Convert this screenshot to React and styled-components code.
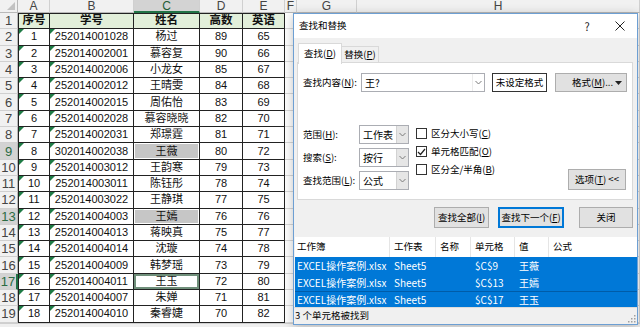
import React from "react";
import styled, { createGlobalStyle, css } from "styled-components";

const GlobalStyle = createGlobalStyle`
  html, body { margin: 0; padding: 0; width: 640px; height: 327px; overflow: hidden; background: #fff; }
  #root { width: 640px; height: 327px; overflow: hidden; }
  * { box-sizing: border-box; }
`;

const UI_FONT = `"Noto Sans CJK SC", "Noto Sans", sans-serif`;
const CELL_FONT = `"Liberation Sans", "Noto Sans CJK SC", sans-serif`;

const Screen = styled.div`
  position: relative;
  width: 640px;
  height: 327px;
  overflow: hidden;
  font-family: ${UI_FONT};
`;

/* ---------- spreadsheet ---------- */
const Sheet = styled.div`
  display: grid;
  grid-template-columns: 18px 32px 84px 66px 43px 42px 12px 60px 283px;
  grid-template-rows: 13px repeat(19, 16.3px) 1fr;
  width: 640px;
  height: 327px;
  background: #fff;
`;

const HeadBase = css`
  display: flex;
  align-items: center;
  justify-content: center;
  background: #f1f1f1;
  color: #444;
  font-family: "Liberation Sans", Arial, sans-serif;
  overflow: hidden;
`;

const Corner = styled.div`
  ${HeadBase};
  position: relative;
  border-right: 1px solid #b9b9b9;
  border-bottom: 1px solid #b9b9b9;
  &::after {
    content: "";
    position: absolute;
    right: 2px;
    bottom: 2px;
    border-left: 8px solid transparent;
    border-bottom: 8px solid #c2c2c2;
  }
`;

const ColHead = styled.div`
  ${HeadBase};
  font-size: 12px;
  border-right: 1px solid #d0d0d0;
  border-bottom: ${(p) => (p.$sel ? "2px solid #217346" : "1px solid #b9b9b9")};
  background: ${(p) => (p.$sel ? "#d3d3d3" : "#f1f1f1")};
  color: ${(p) => (p.$sel ? "#1f5c36" : "#444")};
`;

const RowHead = styled.div`
  ${HeadBase};
  font-size: 13px;
  border-bottom: 1px solid #d0d0d0;
  border-right: ${(p) => (p.$active ? "2px solid #217346" : "1px solid #b9b9b9")};
  background: ${(p) => (p.$sel ? "#d3d3d3" : "#f1f1f1")};
  color: ${(p) => (p.$sel ? "#2b6b43" : "#444")};
`;

const Cell = styled.div`
  position: relative;
  display: flex;
  align-items: center;
  justify-content: center;
  font-family: ${CELL_FONT};
  font-size: 11px;
  line-height: 1;
  color: #111;
  white-space: nowrap;
  overflow: hidden;
  border-right: 1px solid #222;
  border-bottom: 1px solid #222;
  ${(p) => p.$left && "border-left: 1px solid #222;"}
  ${(p) => p.$top && "border-top: 1px solid #222;"}
  ${(p) =>
    p.$head &&
    css`
      background: #e2efda;
      font-weight: 700;
      font-size: 11.5px;
    `}
  ${(p) =>
    p.$shade &&
    css`
      background: #c6c6c6;
      box-shadow: inset 0 0 0 1px #fff;
    `}
  ${(p) =>
    p.$active &&
    css`
      box-shadow: inset 0 0 0 2px #6f8f7a;
    `}
  ${(p) =>
    p.$flag &&
    css`
      &::before {
        content: "";
        position: absolute;
        left: 0;
        top: 0;
        border-top: 5px solid #1e7b45;
        border-right: 5px solid transparent;
      }
    `}
`;

const EmptyCell = styled.div`
  border-right: 1px solid #d8d8d8;
  border-bottom: 1px solid #d8d8d8;
`;

const SheetFooter = styled.div`
  grid-column: 1 / -1;
  background: #efefef;
  border-top: 1px solid #cfcfcf;
`;

/* ---------- dialog ---------- */
const Dialog = styled.div`
  position: absolute;
  left: 293px;
  top: 13px;
  width: 345px;
  height: 312px;
  border: 1px solid #6d9fd3;
  background: #f0f0f0;
  box-shadow: 0 2px 10px rgba(0, 0, 0, 0.25);
  display: flex;
  flex-direction: column;
  font-family: ${UI_FONT};
  font-size: 9.5px;
  color: #000;
  line-height: 1;
`;

const TitleBar = styled.div`
  height: 24px;
  flex: none;
  background: #fff;
  display: flex;
  align-items: center;
  padding-left: 5px;
`;

const Title = styled.span`
  font-size: 9.5px;
  flex: 1;
`;

const TitleBtn = styled.div`
  width: ${(p) => p.$w}px;
  height: 24px;
  display: flex;
  align-items: center;
  justify-content: center;
  font-size: 11px;
  color: #222;
`;

const TabStrip = styled.div`
  display: flex;
  align-items: flex-end;
  height: 20px;
  margin: 5px 0 0 4px;
  position: relative;
  z-index: 1;
`;

const Tab = styled.div`
  height: ${(p) => (p.$active ? 21 : 17)}px;
  width: ${(p) => p.$w}px;
  display: flex;
  align-items: center;
  justify-content: center;
  border: 1px solid #d9d9d9;
  border-bottom: ${(p) => (p.$active ? "none" : "1px solid #d9d9d9")};
  margin-left: ${(p) => (p.$active ? 0 : -1)}px;
  background: ${(p) => (p.$active ? "#fff" : "#f0f0f0")};
  position: relative;
  top: ${(p) => (p.$active ? 1 : 0)}px;
`;

const Panel = styled.div`
  height: 138px;
  margin: -1px 4px 0 3px;
  border: 1px solid #d9d9d9;
  background: #fff;
  padding: 10px 5px 0 5px;
  display: flex;
  flex-direction: column;
`;

const FindRow = styled.div`
  display: flex;
  align-items: center;
  height: 19px;
`;

const Label = styled.span`
  width: ${(p) => p.$w}px;
  flex: none;
  white-space: nowrap;
`;

const ComboBox = styled.div`
  width: ${(p) => p.$w}px;
  height: 19px;
  flex: none;
  border: 1px solid #abadb3;
  background: #fff;
  display: flex;
  align-items: stretch;
`;

const ComboText = styled.span`
  flex: 1;
  display: flex;
  align-items: center;
  padding-left: 3px;
  font-size: 10px;
`;

const ComboArrow = styled.span`
  width: 12px;
  display: flex;
  align-items: center;
  justify-content: center;
  background: ${(p) => (p.$gray ? "#e6e6e6" : "#fff")};
  border-left: 1px solid ${(p) => (p.$gray ? "#d2d2d2" : "#ececec")};
`;

const FormatPreview = styled.div`
  width: 55px;
  height: 19px;
  margin-left: 7px;
  border: 1px solid #333;
  background: #fff;
  display: flex;
  align-items: center;
  justify-content: center;
`;

const Button = styled.div`
  width: ${(p) => p.$w}px;
  height: ${(p) => p.$h || 21}px;
  flex: none;
  background: #e1e1e1;
  border: 1px solid ${(p) => (p.$focus ? "#0078d7" : "#adadad")};
  ${(p) => p.$focus && "box-shadow: inset 0 0 0 1px #0078d7;"}
  display: flex;
  align-items: center;
  justify-content: ${(p) => p.$justify || "center"};
  padding: ${(p) => p.$pad || "0"};
  margin-left: ${(p) => p.$ml || 0}px;
  white-space: nowrap;
`;

const OptionsArea = styled.div`
  display: flex;
  margin-top: 33px;
`;

const SelectColumn = styled.div`
  display: flex;
  flex-direction: column;
  gap: 4px;
`;

const SelectRow = styled.div`
  display: flex;
  align-items: center;
`;

const CheckColumn = styled.div`
  display: flex;
  flex-direction: column;
  gap: 7px;
  margin-left: 7px;
  padding-top: 3px;
`;

const CheckRow = styled.label`
  display: flex;
  align-items: center;
  height: 11px;
  gap: 4px;
  white-space: nowrap;
`;

const Box = styled.span`
  width: 11px;
  height: 11px;
  border: 1px solid #333;
  background: #fff;
  display: flex;
  align-items: center;
  justify-content: center;
`;

const OptionsBtnWrap = styled.div`
  margin-left: auto;
  margin-right: 1px;
  display: flex;
  align-items: flex-end;
`;

const ButtonRow = styled.div`
  display: flex;
  justify-content: flex-end;
  margin: 7px 4px 0 0;
`;

const ResultList = styled.div`
  margin: 9px 0 0 1px;
  height: 70px;
  background: #fff;
  display: flex;
  flex-direction: column;
`;

const ResultRow = styled.div`
  display: grid;
  grid-template-columns: 95px 46px 35px 44px 34px 1fr;
  height: ${(p) => p.$h}px;
  background: ${(p) => (p.$sel ? "#0078d7" : "#fff")};
  color: ${(p) => (p.$sel ? "#fff" : "#000")};
  font-size: ${(p) => (p.$sel ? 10 : 9.5)}px;
  ${(p) => p.$line && "border-top: 1px solid #005ca8;"}
`;

const ResultCell = styled.div`
  display: flex;
  align-items: center;
  padding-left: ${(p) => (p.$first ? 2 : 4)}px;
  white-space: nowrap;
  overflow: hidden;
  ${(p) => p.$sep && "border-right: 1px solid #e5e5e5;"}
`;

const StatusBar = styled.div`
  flex: 1;
  border-top: 1px solid #dcdcdc;
  display: flex;
  align-items: center;
  padding-left: 1px;
  position: relative;
`;

const Grip = styled.svg`
  position: absolute;
  right: 1px;
  bottom: 1px;
`;

/* ---------- icons ---------- */
const Chevron = () => (
  <svg width="7" height="5" viewBox="0 0 7 5">
    <polyline points="0.5,1 3.5,4 6.5,1" fill="none" stroke="#7a7a7a" strokeWidth="1" />
  </svg>
);

const Caret = () => (
  <svg width="7" height="4" viewBox="0 0 7 4">
    <polygon points="0,0 7,0 3.5,4" fill="#222" />
  </svg>
);

const CloseIcon = () => (
  <svg width="10" height="10" viewBox="0 0 10 10">
    <line x1="0.5" y1="0.5" x2="9.5" y2="9.5" stroke="#222" strokeWidth="1" />
    <line x1="9.5" y1="0.5" x2="0.5" y2="9.5" stroke="#222" strokeWidth="1" />
  </svg>
);

const Check = () => (
  <svg width="9" height="8" viewBox="0 0 9 8">
    <polyline points="1,4 3.5,6.5 8,1" fill="none" stroke="#222" strokeWidth="1.2" />
  </svg>
);

/* ---------- data ---------- */
const rows = [
  ["1", "252014001028", "杨过", "89", "65"],
  ["2", "252014002001", "慕容复", "90", "66"],
  ["3", "252014002006", "小龙女", "85", "67"],
  ["4", "252014002012", "王晴雯", "84", "68"],
  ["5", "252014002015", "周佑怡", "83", "69"],
  ["6", "252014002028", "慕容晓晓", "82", "70"],
  ["7", "252014002031", "郑璟霆", "81", "71"],
  ["8", "302014002038", "王薇", "80", "72"],
  ["9", "252014003012", "王韵寒", "79", "73"],
  ["10", "252014003011", "陈钰彤", "78", "74"],
  ["11", "252014003022", "王静琪", "77", "75"],
  ["12", "252014004003", "王嫣", "76", "76"],
  ["13", "252014004013", "蒋映真", "75", "77"],
  ["14", "252014004014", "沈璇", "74", "78"],
  ["15", "252014004009", "韩梦瑶", "73", "79"],
  ["16", "252014004011", "王玉", "72", "80"],
  ["17", "252014004007", "朱婵", "71", "81"],
  ["18", "252014004010", "秦睿婕", "70", "82"],
];

const shadedRows = [9, 13];
const activeRow = 17;

const results = [
  ["EXCEL操作案例.xlsx", "Sheet5", "", "$C$9", "王薇"],
  ["EXCEL操作案例.xlsx", "Sheet5", "", "$C$13", "王嫣"],
  ["EXCEL操作案例.xlsx", "Sheet5", "", "$C$17", "王玉"],
];

const Acc = ({ text, k }) => (
  <>
    {text}(<u>{k}</u>)
  </>
);

function SpreadSheet() {
  const letters = ["A", "B", "C", "D", "E", "F", "G", "H"];
  const headers = ["序号", "学号", "姓名", "高数", "英语"];
  return (
    <Sheet>
      <Corner />
      {letters.map((l) => (
        <ColHead key={l} $sel={l === "C"}>
          {l}
        </ColHead>
      ))}
      <RowHead>1</RowHead>
      {headers.map((h, i) => (
        <Cell key={h} $head $top $left={i === 0}>
          {h}
        </Cell>
      ))}
      <EmptyCell />
      <EmptyCell />
      <EmptyCell />
      {rows.map((r, idx) => {
        const n = idx + 2;
        const sel = shadedRows.includes(n) || n === activeRow;
        return (
          <React.Fragment key={n}>
            <RowHead $sel={sel} $active={n === activeRow}>
              {n}
            </RowHead>
            {r.map((v, i) => (
              <Cell
                key={i}
                $left={i === 0}
                $flag={i < 2}
                $shade={i === 2 && shadedRows.includes(n)}
                $active={i === 2 && n === activeRow}
              >
                {v}
              </Cell>
            ))}
            <EmptyCell />
            <EmptyCell />
            <EmptyCell />
          </React.Fragment>
        );
      })}
      <SheetFooter />
    </Sheet>
  );
}

function FindDialog() {
  return (
    <Dialog>
      <TitleBar>
        <Title>查找和替换</Title>
        <TitleBtn $w={32}>?</TitleBtn>
        <TitleBtn $w={34}>
          <CloseIcon />
        </TitleBtn>
      </TitleBar>
      <TabStrip>
        <Tab $active $w={44}>
          <Acc text="查找" k="D" />
        </Tab>
        <Tab $w={38}>
          <Acc text="替换" k="P" />
        </Tab>
      </TabStrip>
      <Panel>
        <FindRow>
          <Label $w={58}>
            查找内容(<u>N</u>):
          </Label>
          <ComboBox $w={124}>
            <ComboText>王?</ComboText>
            <ComboArrow>
              <Chevron />
            </ComboArrow>
          </ComboBox>
          <FormatPreview>未设定格式</FormatPreview>
          <Button $w={72} $h={19} $ml={8} $justify="space-between" $pad="0 4px 0 16px">
            <span>
              格式(<u>M</u>)...
            </span>
            <Caret />
          </Button>
        </FindRow>
        <OptionsArea>
          <SelectColumn>
            <SelectRow>
              <Label $w={56}>
                范围(<u>H</u>):
              </Label>
              <ComboBox $w={50}>
                <ComboText>工作表</ComboText>
                <ComboArrow $gray>
                  <Chevron />
                </ComboArrow>
              </ComboBox>
            </SelectRow>
            <SelectRow>
              <Label $w={56}>
                搜索(<u>S</u>):
              </Label>
              <ComboBox $w={50}>
                <ComboText>按行</ComboText>
                <ComboArrow $gray>
                  <Chevron />
                </ComboArrow>
              </ComboBox>
            </SelectRow>
            <SelectRow>
              <Label $w={56}>
                查找范围(<u>L</u>):
              </Label>
              <ComboBox $w={50}>
                <ComboText>公式</ComboText>
                <ComboArrow $gray>
                  <Chevron />
                </ComboArrow>
              </ComboBox>
            </SelectRow>
          </SelectColumn>
          <CheckColumn>
            <CheckRow>
              <Box />
              <span>
                区分大小写(<u>C</u>)
              </span>
            </CheckRow>
            <CheckRow>
              <Box>
                <Check />
              </Box>
              <span>
                单元格匹配(<u>O</u>)
              </span>
            </CheckRow>
            <CheckRow>
              <Box />
              <span>
                区分全/半角(<u>B</u>)
              </span>
            </CheckRow>
          </CheckColumn>
          <OptionsBtnWrap>
            <Button $w={58} $h={21}>
              选项(<u>T</u>)&nbsp;&lt;&lt;
            </Button>
          </OptionsBtnWrap>
        </OptionsArea>
      </Panel>
      <ButtonRow>
        <Button $w={55}>
          查找全部(<u>I</u>)
        </Button>
        <Button $w={66} $ml={9} $focus>
          查找下一个(<u>F</u>)
        </Button>
        <Button $w={54} $ml={15}>
          关闭
        </Button>
      </ButtonRow>
      <ResultList>
        <ResultRow $h={20}>
          <ResultCell $first $sep>工作簿</ResultCell>
          <ResultCell $sep>工作表</ResultCell>
          <ResultCell $sep>名称</ResultCell>
          <ResultCell $sep>单元格</ResultCell>
          <ResultCell $sep>值</ResultCell>
          <ResultCell>公式</ResultCell>
        </ResultRow>
        {results.map((r, i) => (
          <ResultRow key={i} $h={i === 2 ? 16 : 17} $sel $line={i === 2}>
            {r.map((v, j) => (
              <ResultCell key={j} $first={j === 0}>
                {v}
              </ResultCell>
            ))}
            <ResultCell />
          </ResultRow>
        ))}
      </ResultList>
      <StatusBar>
        3 个单元格被找到
        <Grip width="9" height="9" viewBox="0 0 9 9">
          {[
            [7, 1],
            [7, 4],
            [4, 4],
            [7, 7],
            [4, 7],
            [1, 7],
          ].map(([x, y], i) => (
            <rect key={i} x={x} y={y} width="1.5" height="1.5" fill="#a0a0a0" />
          ))}
        </Grip>
      </StatusBar>
    </Dialog>
  );
}

export default function App() {
  return (
    <Screen>
      <GlobalStyle />
      <SpreadSheet />
      <FindDialog />
    </Screen>
  );
}
